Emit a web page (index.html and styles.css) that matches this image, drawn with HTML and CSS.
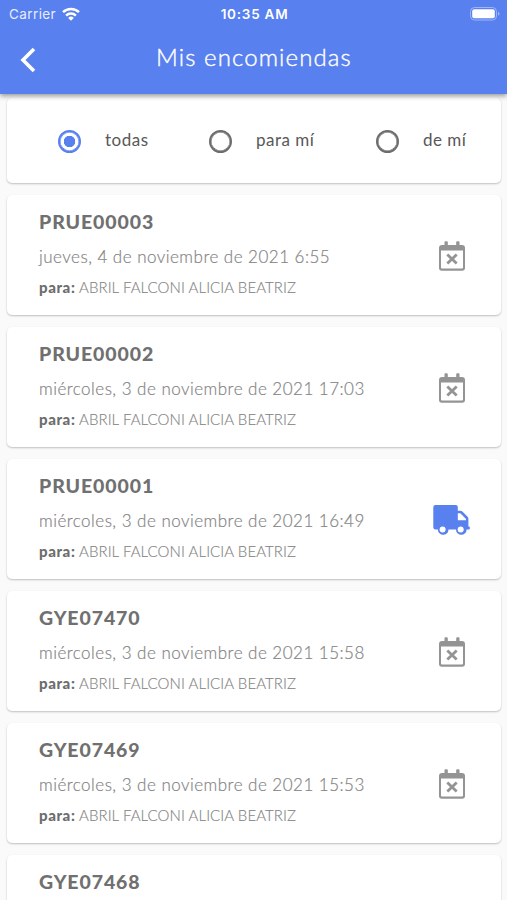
FILE: index.html
```html
<!DOCTYPE html>
<html lang="es">
<head>
<meta charset="utf-8">
<title>Mis encomiendas</title>
<link rel="stylesheet" href="styles.css">
</head>
<body>
<svg class="defs" aria-hidden="true">
  <symbol id="calendar" viewBox="0 0 26 30">
    <path fill="currentColor" fill-rule="evenodd" d="M5.500 1.300Q5.500.3 6.500.3h1.300q1 0 1 1V4h8.400V1.300q0-1 1-1h1.300q1 0 1 1V4h2.500Q26 4 26 7v20q0 2.800-3 2.800H3Q0 29.800 0 27V7Q0 4 3 4h2.500zM2 9.500V26.500q0 1 1 1h20q1 0 1-1V9.500z"/>
    <path fill="none" stroke="currentColor" stroke-width="2.800" d="M8.300 13.500l9.400 9m0-9l-9.400 9"/>
  </symbol>
  <symbol id="truck" viewBox="0 0 37 30">
    <path fill="currentColor" fill-rule="evenodd" d="M2.500 0h20.300q2 0 2 2v3.800h2.600q1.300 0 2.200.9l5 5q.8.800.8 2v7.800h.7q.7 0 .7.700v1.600q0 .7-.7.700h-2.500a5.300 5.300 0 0 1-10.600 0h-7.500a5.300 5.300 0 0 1-10.600 0H2.500Q.300 24.500.300 22.300V2.300Q.300 0 2.500 0zM24.800 8.300v7h8.200v-1.200l-5.400-5.500q-.3-.3-.7-.3z"/>
    <circle cx="9.600" cy="24.400" r="3" fill="#fff"/><circle cx="27.700" cy="24.400" r="3" fill="#fff"/>
  </symbol>
</svg>
<header class="header">
  <div class="status">
    <div class="status-left"><span class="carrier">Carrier</span>
      <svg class="wifi" viewBox="0 0 18 14"><g fill="none" stroke="#fff" stroke-width="2.500"><path d="M1 5.200a11.300 11.300 0 0 1 16 0"/><path d="M4.100 8.600a7 7 0 0 1 9.800 0"/></g><path fill="#fff" d="M9 13.700L6.200 10.900a4 4 0 0 1 5.600 0z"/></svg>
    </div>
    <span class="clock">10:35 AM</span>
    <svg class="battery" viewBox="0 0 30 14"><rect x=".5" y=".5" width="26" height="12.500" rx="4" fill="none" stroke="#9fb5f5"/><rect x="2.200" y="2.200" width="22.600" height="9.100" rx="2" fill="#fff"/><path fill="#9fb5f5" d="M28 4.700q1.500.5 1.500 2T28 8.800z"/></svg>
  </div>
  <div class="toolbar">
    <svg class="back" viewBox="0 0 16 26"><path d="M14 2L3 13 14 24" fill="none" stroke="#fff" stroke-width="3.600"/></svg>
    <h1 class="title">Mis encomiendas</h1>
  </div>
</header>
<main class="content">
  <section class="card filters">
    <div class="option"><span class="radio on"></span><span class="label">todas</span></div>
    <div class="option"><span class="radio"></span><span class="label">para mí</span></div>
    <div class="option"><span class="radio"></span><span class="label">de mí</span></div>
  </section>
  <article class="card item">
    <div class="info"><h2 class="code">PRUE00003</h2><p class="date">jueves, 4 de noviembre de 2021 6:55</p><p class="person"><b>para:</b><span>ABRIL FALCONI ALICIA BEATRIZ</span></p></div>
    <svg class="calendar"><use href="#calendar"/></svg>
  </article>
  <article class="card item">
    <div class="info"><h2 class="code">PRUE00002</h2><p class="date">miércoles, 3 de noviembre de 2021 17:03</p><p class="person"><b>para:</b><span>ABRIL FALCONI ALICIA BEATRIZ</span></p></div>
    <svg class="calendar"><use href="#calendar"/></svg>
  </article>
  <article class="card item">
    <div class="info"><h2 class="code">PRUE00001</h2><p class="date">miércoles, 3 de noviembre de 2021 16:49</p><p class="person"><b>para:</b><span>ABRIL FALCONI ALICIA BEATRIZ</span></p></div>
    <svg class="truck"><use href="#truck"/></svg>
  </article>
  <article class="card item">
    <div class="info"><h2 class="code">GYE07470</h2><p class="date">miércoles, 3 de noviembre de 2021 15:58</p><p class="person"><b>para:</b><span>ABRIL FALCONI ALICIA BEATRIZ</span></p></div>
    <svg class="calendar"><use href="#calendar"/></svg>
  </article>
  <article class="card item">
    <div class="info"><h2 class="code">GYE07469</h2><p class="date">miércoles, 3 de noviembre de 2021 15:53</p><p class="person"><b>para:</b><span>ABRIL FALCONI ALICIA BEATRIZ</span></p></div>
    <svg class="calendar"><use href="#calendar"/></svg>
  </article>
  <article class="card item last">
    <div class="info"><h2 class="code">GYE07468</h2></div>
  </article>
</main>
</body>
</html>
```
FILE: styles.css
```css
* { box-sizing: border-box; }
body { margin: 0; height: 900px; overflow: hidden; background: #fafafa; font-family: Lato, sans-serif; }
h1, h2, p { margin: 0; }
svg { display: block; flex: none; }
.defs { position: absolute; width: 0; height: 0; }
.header { position: relative; z-index: 1; height: 94px; background: #5880ee; color: #fff; box-shadow: 0 2px 5px rgba(0,0,0,.4); }
.status { display: grid; grid-template-columns: 1fr auto 1fr; align-items: center; height: 27px; padding: 0 7px 0 9px; font-family: Inter, sans-serif; font-size: 13px; }
.status-left { display: flex; align-items: center; gap: 6px; }
.carrier { width: 47px; font-size: 13.500px; letter-spacing: .4px; white-space: nowrap; color: #e7edff; }
.wifi { width: 18px; height: 14px; }
.clock { font-size: 13.500px; font-weight: 600; letter-spacing: .75px; }
.battery { width: 30px; height: 14px; justify-self: end; }
.toolbar { display: grid; grid-template-columns: 40px 1fr 40px; align-items: center; height: 60px; padding: 0 0 0 20px; }
.toolbar .back { width: 16px; height: 26px; margin-top: 5px; }
.title { width: 196px; margin-left: 96px; font-size: 24px; font-weight: 300; line-height: 30px; letter-spacing: 1.1px; white-space: nowrap; -webkit-text-stroke: .4px #fff; }
.content { display: flex; flex-direction: column; gap: 12px; padding: 4px 6px 0 7px; }
.card { flex: none; background: #fff; border-radius: 5px; box-shadow: 0 1px 2px rgba(0,0,0,.24); }
.filters { display: flex; height: 85px; padding: 1px 0 0 51px; align-items: center; }
.option { display: flex; align-items: center; gap: 24px; }
.option:nth-child(1) { width: 151px; }
.option:nth-child(2) { width: 167px; }
.radio { width: 23px; height: 23px; border: 2px solid #6d6d6d; border-radius: 50%; box-shadow: inset 0 0 0 .5px #6d6d6d; }
.radio.on { border-color: #5880ee; background: radial-gradient(circle, #5880ee 5.500px, #fff 6px); box-shadow: inset 0 0 0 .5px #5880ee; }
.label { font-size: 17px; letter-spacing: .5px; color: #585858; line-height: 24px; margin-top: -2px; white-space: nowrap; }
.item { display: flex; height: 120px; justify-content: space-between; align-items: center; padding: 2px 36px 0 32px; }
.item.last { height: 45px; border-radius: 5px 5px 0 0; }
.item .info { align-self: flex-start; padding-top: 12px; white-space: nowrap; }
.code { font-size: 19.500px; line-height: 26px; font-weight: 900; color: #707070; letter-spacing: .9px; }
.date { margin-top: 10px; font-size: 17px; line-height: 24px; font-weight: 300; color: #858585; letter-spacing: .48px; -webkit-text-stroke: .2px #858585; }
.person { display: flex; margin-top: 7px; font-size: 15px; line-height: 22px; font-weight: 300; color: #858585; letter-spacing: .07px; -webkit-text-stroke: .15px #858585; }
.person b { width: 40px; letter-spacing: .6px; font-weight: 900; color: #6d6d6d; -webkit-text-stroke: 0; }
.calendar { width: 26px; height: 30px; color: #949494; }
.truck { width: 37px; height: 30px; margin-right: -5px; color: #5880ee; }
```
